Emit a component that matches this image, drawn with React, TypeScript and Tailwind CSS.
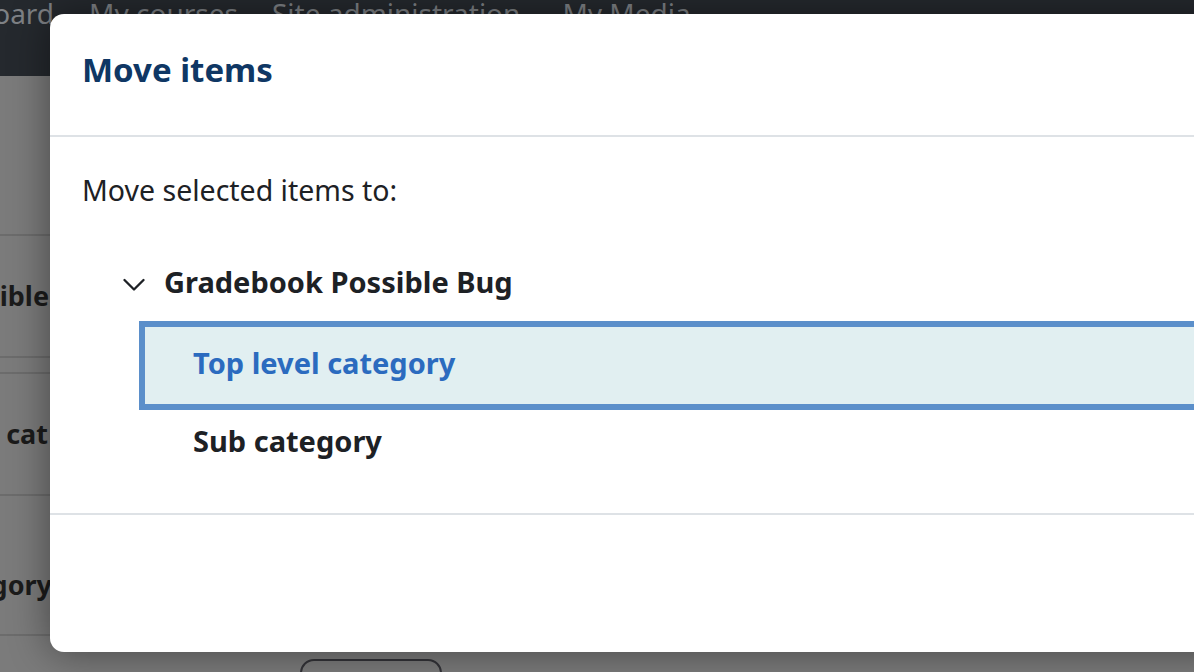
const font = { fontFamily: '"Noto Sans", "Open Sans", sans-serif' };

function BackRow({ text, height, box = "w-[52px]", extra = "" }: { text: string; height: string; box?: string; extra?: string }) {
  return (
    <div className={`flex items-center border-b-2 border-[#6c6c6c] ${height} ${extra}`}>
      <div className={`flex ${box} justify-end overflow-hidden whitespace-pre text-[27px] font-bold text-[#1b1b1b]`}>
        {text}
      </div>
    </div>
  );
}

function Chevron() {
  return (
    <svg width="22" height="14" viewBox="0 0 22 14" fill="none" className="mt-[6px] mr-[19px] shrink-0">
      <polyline points="1.5,2 11,11.5 20.5,2" stroke="#1d2125" strokeWidth="2.3" strokeLinecap="round" strokeLinejoin="round" />
    </svg>
  );
}

function Background() {
  return (
    <div className="flex h-full flex-col">
      <nav className="flex h-[76px] shrink-0 items-start overflow-hidden bg-[#25292e] text-[28px] leading-[32px] text-[#7e8185]">
        <span className="-mt-[3px] -ml-[24px] whitespace-nowrap">board</span>
        <span className="-mt-[3px] ml-[35px] whitespace-nowrap">My courses</span>
        <span className="-mt-[3px] ml-[34px] whitespace-nowrap">Site administration</span>
        <span className="-mt-[3px] ml-[42px] whitespace-nowrap">My Media</span>
      </nav>
      <div className="flex flex-col">
        <div className="h-[160px] border-b-2 border-[#6c6c6c]" />
        <BackRow text="Gradebook Possible" height="h-[122px]" box="w-[49px]" />
        <div className="h-[16px] border-b-2 border-[#6c6c6c]" />
        <BackRow text="Top level cat" height="h-[122px]" box="w-[48px]" />
        <BackRow text="Sub category" height="h-[140px]" extra="pt-[40px]" />
        <div className="mt-[23px] ml-[300px] h-[40px] w-[142px] rounded-[14px] border-2 border-[#333338]" />
      </div>
    </div>
  );
}

function Modal() {
  return (
    <div className="absolute top-[14px] left-[50px] flex h-[638px] w-[1180px] flex-col rounded-[14px] bg-white shadow-[0_0_40px_rgba(0,0,0,0.45)]">
      <div className="flex h-[123px] shrink-0 items-start border-b-2 border-[#dee2e6] px-[32px] pt-[34px]">
        <h1 className="text-[33px] leading-[44px] font-bold text-[#0f3764]">Move items</h1>
      </div>
      <div className="flex h-[378px] shrink-0 flex-col border-b-2 border-[#dee2e6] pt-[34px]">
        <p className="px-[32px] text-[28.5px] leading-[38px] text-[#1d2125]">Move selected items to:</p>
        <div className="mt-[51px] flex h-[44px] items-center pl-[73px]">
          <Chevron />
          <span className="text-[29px] font-bold text-[#1d2125]">Gradebook Possible Bug</span>
        </div>
        <div className="mt-[17px] ml-[89px] flex h-[89px] shrink-0 items-center border-[6px] border-[#5b8fca] bg-[#e1eff1] pb-[5px] pl-[48px]">
          <span className="text-[29px] font-bold text-[#2b6bbf]">Top level category</span>
        </div>
        <div className="flex h-[62px] shrink-0 items-center pl-[143px]">
          <span className="text-[29px] font-bold text-[#1d2125]">Sub category</span>
        </div>
      </div>
      <div className="flex-1" />
    </div>
  );
}

export default function App() {
  return (
    <div className="relative h-[672px] w-[1194px] overflow-hidden bg-[#7b7b7b]" style={font}>
      <Background />
      <Modal />
    </div>
  );
}
